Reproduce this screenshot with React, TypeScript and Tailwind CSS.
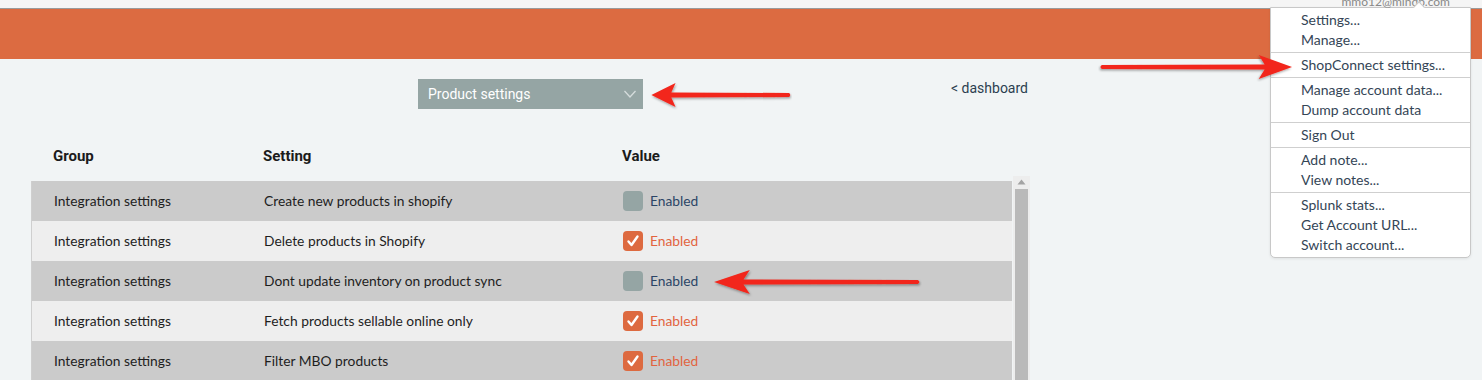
import React from "react";

type Row = { setting: string; on: boolean };

const rows: Row[] = [
  { setting: "Create new products in shopify", on: false },
  { setting: "Delete products in Shopify", on: true },
  { setting: "Dont update inventory on product sync", on: false },
  { setting: "Fetch products sellable online only", on: true },
  { setting: "Filter MBO products", on: true },
];

const menuGroups = [
  ["Settings...", "Manage..."],
  ["ShopConnect settings..."],
  ["Manage account data...", "Dump account data"],
  ["Sign Out"],
  ["Add note...", "View notes..."],
  ["Splunk stats...", "Get Account URL...", "Switch account..."],
];

const Checkbox = ({ on }: { on: boolean }) =>
  on ? (
    <span className="flex h-[20px] w-[20px] items-center justify-center rounded-[4px] bg-[#dd6a40]">
      <svg width="14" height="14" viewBox="0 0 14 14">
        <path d="M2.5 7.5 L5.5 11 L11.5 2.5" fill="none" stroke="#fff" strokeWidth="2.4" strokeLinecap="round" strokeLinejoin="round" />
      </svg>
    </span>
  ) : (
    <span className="h-[20px] w-[20px] rounded-[4px] bg-[#95a5a4]" />
  );

// red annotation arrow, tip at the left (x=0) of the viewbox
const Arrow = ({ className, flip }: { className: string; flip?: boolean }) => (
  <svg className={className} viewBox="0 0 200 30" preserveAspectRatio="none" style={flip ? { transform: "scaleX(-1)" } : undefined}>
    <defs>
      <filter id="sh" x="-10%" y="-50%" width="120%" height="200%">
        <feDropShadow dx="1" dy="1.5" stdDeviation="1.2" floodColor="#000" floodOpacity="0.35" />
      </filter>
    </defs>
    <path
      d="M2 15 L36 3 L30 12.5 L196 13 Q199 15 196 17 L30 17.5 L36 27 Z"
      fill="#f2261b"
      filter="url(#sh)"
    />
  </svg>
);

export default function App() {
  return (
    <div className="relative h-[380px] w-[1482px] overflow-hidden bg-[#f1f4f5] font-['Lato',sans-serif]">
      {/* top strip */}
      <div className="h-[9px] border-b border-[#9a9a9a] bg-[#f5f5f5]" />
      <div className="h-[50px] bg-[#dc6b41]" />

      <div className="ml-[31px] w-[999px]">
        {/* selector row */}
        <div className="mt-[20px] grid grid-cols-[1fr_auto_1fr]">
          <div />
          <div className="flex h-[30px] w-[225px] items-center justify-between bg-[#95a5a4] pl-[10px] pr-[6px] font-['Roboto',sans-serif] text-[14px] text-white">
            <span>Product settings</span>
            <svg width="14" height="10" viewBox="0 0 14 10">
              <path d="M1.5 2 L7 8 L12.5 2" fill="none" stroke="#d5dcdc" strokeWidth="1.3" />
            </svg>
          </div>
          <div className="justify-self-end pr-[2px] font-['Roboto',sans-serif] text-[14px] leading-[18px] text-[#2c3e50]">
            &lt; dashboard
          </div>
        </div>

        {/* header */}
        <div className="mt-[27px] grid h-[40px] grid-cols-[232px_359px_1fr] items-center font-['Roboto',sans-serif] text-[15px] font-bold text-[#1b1b1b]">
          <div className="pl-[22px]">Group</div>
          <div>Setting</div>
          <div>Value</div>
        </div>

        {/* body */}
        <div className="flex">
          <div className="mt-[5px] w-[983px]">
            {rows.map((r, i) => (
              <div
                key={r.setting}
                className={`grid h-[40px] grid-cols-[232px_359px_1fr] items-center border-l border-[#cfcfcf] text-[13.8px] text-[#1e1e1e] ${
                  i % 2 === 0 ? "bg-[#cbcbcb]" : "bg-[#eeeeee]"
                }`}
              >
                <div className="pl-[22px]">Integration settings</div>
                <div>{r.setting}</div>
                <div className="flex items-center gap-[7px]">
                  <Checkbox on={r.on} />
                  <span className={r.on ? "text-[#e2643f]" : "text-[#2b4566]"}>Enabled</span>
                </div>
              </div>
            ))}
          </div>
          {/* scrollbar */}
          <div className="ml-[1px] flex w-[17px] flex-col items-center bg-[#ededed]">
            <svg className="mt-[3px]" width="9" height="6" viewBox="0 0 9 6">
              <path d="M0.5 5.5 L4.5 0.5 L8.5 5.5 Z" fill="#a3a3a3" />
            </svg>
            <div className="mt-[4px] h-[300px] w-[13px] bg-[#b9b9b9]" />
          </div>
        </div>
      </div>

      {/* user menu */}
      <div className="absolute left-[1270px] top-[7px] w-[201px] rounded-b-[5px] border border-[#c8c8c8] bg-white text-[14px] leading-[20px] text-[#344556] shadow-[0_1px_3px_rgba(0,0,0,0.08)]">
        <div className="absolute -top-[16px] right-[20px] text-[12px] text-[#888]">mmo12@mindb.com</div>
        <div className="absolute -top-[5px] left-[144px] h-[8px] w-[8px] rotate-45 border-l border-t border-[#c8c8c8] bg-white" />
        {menuGroups.map((g, i) => (
          <div key={i} className={`py-[2px] ${i > 0 ? "border-t border-[#cfcfcf]" : ""}`}>
            {g.map((t) => (
              <div key={t} className="pl-[30px]">
                {t}
              </div>
            ))}
          </div>
        ))}
      </div>

      {/* annotation arrows */}
      <Arrow className="absolute left-[650px] top-[80px] h-[30px] w-[142px]" />
      <Arrow className="absolute left-[1098px] top-[52px] h-[30px] w-[196px]" flip />
      <Arrow className="absolute left-[712px] top-[267px] h-[30px] w-[210px]" />
    </div>
  );
}
